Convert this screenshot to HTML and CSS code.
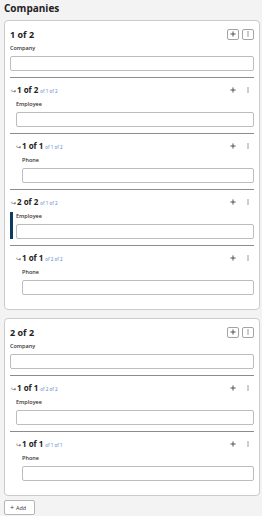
FILE: index.html
```html
<!DOCTYPE html>
<html lang="en">
<head>
  <meta charset="UTF-8" />
  <meta name="viewport" content="width=device-width, initial-scale=1.0" />
  <title>Companies</title>
  <link rel="stylesheet" href="styles.css">
</head>
<body>
  <h1 class="title">Companies</h1>

  <div class="card">
    <div class="card-head">
      <span class="count">1 of 2</span>
      <div class="actions">
        <button class="icon-btn boxed"><svg viewBox="0 0 8 8"><path d="M4 1.8v4.4M1.8 4h4.4"/></svg></button>
        <button class="icon-btn boxed"><svg viewBox="0 0 8 8"><path d="M4 1.8v.4M4 3.8v.4M4 5.8v.4"/></svg></button>
      </div>
    </div>
    <div class="field">
      <label>Company</label>
      <input type="text" />
    </div>

    <div class="item lvl1">
      <div class="item-head">
        <span class="arrow">↪</span><span class="count">1 of 2</span><span class="path">of 1 of 2</span>
        <div class="actions">
          <button class="icon-btn"><svg viewBox="0 0 8 8"><path d="M4 1.8v4.4M1.8 4h4.4"/></svg></button>
          <button class="icon-btn"><svg viewBox="0 0 8 8"><path d="M4 1.8v.4M4 3.8v.4M4 5.8v.4"/></svg></button>
        </div>
      </div>
      <div class="field">
        <label>Employee</label>
        <input type="text" />
      </div>
    </div>

    <div class="item lvl2">
      <div class="item-head">
        <span class="arrow">↪</span><span class="count">1 of 1</span><span class="path">of 1 of 2</span>
        <div class="actions">
          <button class="icon-btn"><svg viewBox="0 0 8 8"><path d="M4 1.8v4.4M1.8 4h4.4"/></svg></button>
          <button class="icon-btn"><svg viewBox="0 0 8 8"><path d="M4 1.8v.4M4 3.8v.4M4 5.8v.4"/></svg></button>
        </div>
      </div>
      <div class="field">
        <label>Phone</label>
        <input type="text" />
      </div>
    </div>

    <div class="item lvl1">
      <div class="item-head">
        <span class="arrow">↪</span><span class="count">2 of 2</span><span class="path">of 1 of 2</span>
        <div class="actions">
          <button class="icon-btn"><svg viewBox="0 0 8 8"><path d="M4 1.8v4.4M1.8 4h4.4"/></svg></button>
          <button class="icon-btn"><svg viewBox="0 0 8 8"><path d="M4 1.8v.4M4 3.8v.4M4 5.8v.4"/></svg></button>
        </div>
      </div>
      <div class="field active">
        <label>Employee</label>
        <input type="text" />
      </div>
    </div>

    <div class="item lvl2">
      <div class="item-head">
        <span class="arrow">↪</span><span class="count">1 of 1</span><span class="path">of 2 of 2</span>
        <div class="actions">
          <button class="icon-btn"><svg viewBox="0 0 8 8"><path d="M4 1.8v4.4M1.8 4h4.4"/></svg></button>
          <button class="icon-btn"><svg viewBox="0 0 8 8"><path d="M4 1.8v.4M4 3.8v.4M4 5.8v.4"/></svg></button>
        </div>
      </div>
      <div class="field">
        <label>Phone</label>
        <input type="text" />
      </div>
    </div>
  </div>

  <div class="card">
    <div class="card-head">
      <span class="count">2 of 2</span>
      <div class="actions">
        <button class="icon-btn boxed"><svg viewBox="0 0 8 8"><path d="M4 1.8v4.4M1.8 4h4.4"/></svg></button>
        <button class="icon-btn boxed"><svg viewBox="0 0 8 8"><path d="M4 1.8v.4M4 3.8v.4M4 5.8v.4"/></svg></button>
      </div>
    </div>
    <div class="field">
      <label>Company</label>
      <input type="text" />
    </div>

    <div class="item lvl1">
      <div class="item-head">
        <span class="arrow">↪</span><span class="count">1 of 1</span><span class="path">of 2 of 2</span>
        <div class="actions">
          <button class="icon-btn"><svg viewBox="0 0 8 8"><path d="M4 1.8v4.4M1.8 4h4.4"/></svg></button>
          <button class="icon-btn"><svg viewBox="0 0 8 8"><path d="M4 1.8v.4M4 3.8v.4M4 5.8v.4"/></svg></button>
        </div>
      </div>
      <div class="field">
        <label>Employee</label>
        <input type="text" />
      </div>
    </div>

    <div class="item lvl2">
      <div class="item-head">
        <span class="arrow">↪</span><span class="count">1 of 1</span><span class="path">of 1 of 1</span>
        <div class="actions">
          <button class="icon-btn"><svg viewBox="0 0 8 8"><path d="M4 1.8v4.4M1.8 4h4.4"/></svg></button>
          <button class="icon-btn"><svg viewBox="0 0 8 8"><path d="M4 1.8v.4M4 3.8v.4M4 5.8v.4"/></svg></button>
        </div>
      </div>
      <div class="field">
        <label>Phone</label>
        <input type="text" />
      </div>
    </div>
  </div>

  <button class="add-btn"><span class="plus">+</span> Add</button>
</body>
</html>
```

FILE: styles.css
```css
body {
  font-family: "Open Sans", Arial, sans-serif;
  background-color: #f3f3f3;
  color: #222;
  margin: 0;
  padding: 0 2px 0 4px;
}

.title {
  font-size: 10px;
  font-weight: 700;
  line-height: 16px;
  margin: 0 0 4px;
}

.card {
  background-color: #fff;
  border: 1px solid #cbcbcb;
  border-radius: 4px;
  padding: 5px 5px 8px;
  margin-bottom: 8px;
}

.card-head {
  display: flex;
  align-items: center;
  height: 16px;
}

.card-head .count {
  font-size: 9px;
  font-weight: 700;
}

.actions {
  margin-left: auto;
  display: flex;
  gap: 3px;
}

.icon-btn {
  width: 12px;
  height: 11px;
  padding: 0;
  border: 1px solid transparent;
  border-radius: 2px;
  background: #fff;
  display: flex;
  align-items: center;
  justify-content: center;
}

.icon-btn.boxed {
  border-color: #a3a3a3;
}

.icon-btn svg {
  width: 8px;
  height: 8px;
  fill: none;
  stroke: #444;
  stroke-width: 0.9;
  stroke-linecap: round;
}

.field {
  margin-top: 2px;
}

.item .field {
  margin-top: 4px;
}

.field label {
  display: block;
  font-size: 5.5px;
  font-weight: 600;
  line-height: 8px;
  margin-bottom: 4px;
  color: #333;
}

.field input {
  display: block;
  width: 100%;
  height: 15px;
  box-sizing: border-box;
  border: 1px solid #bdbdbd;
  border-radius: 2px;
  margin: 0;
  padding: 0 4px;
}

.field.active {
  border-left: 3px solid #0c3a63;
}

.item {
  border-top: 1px solid #8c8c8c;
  padding: 6px 0;
}

.card > .field + .item {
  margin-top: 6px;
}

.item-head {
  display: flex;
  align-items: baseline;
  height: 12px;
  line-height: 12px;
}

.item-head .actions {
  align-self: center;
}

.arrow {
  font-size: 6px;
  color: #555;
  margin-right: 1px;
}

.item-head .count {
  font-size: 8px;
  font-weight: 700;
}

.path {
  font-size: 4.5px;
  color: #4a7ec4;
  margin-left: 2px;
}

.lvl1 .item-head {
  padding-left: 1px;
}

.lvl1 .field {
  padding-left: 6px;
}

.lvl1 .field.active {
  padding-left: 3px;
}

.lvl2 .item-head {
  padding-left: 6px;
}

.lvl2 .field {
  padding-left: 12px;
}

.add-btn {
  display: flex;
  align-items: center;
  gap: 2px;
  width: 31px;
  height: 15px;
  margin-top: -4px;
  padding: 0 0 0 5px;
  background: #fff;
  border: 1px solid #b5b5b5;
  border-radius: 2px;
  font-family: "Open Sans", Arial, sans-serif;
  font-size: 5.5px;
  color: #333;
}

.add-btn .plus {
  font-size: 7px;
}
```
